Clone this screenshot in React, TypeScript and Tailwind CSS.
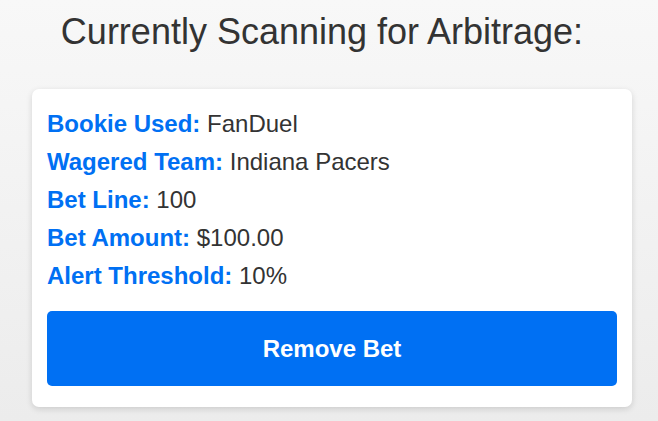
import { FC } from "react";

type BetRow = {
  label: string;
  value: string;
};

const rows: BetRow[] = [
  { label: "Bookie Used:", value: "FanDuel" },
  { label: "Wagered Team:", value: "Indiana Pacers" },
  { label: "Bet Line:", value: "100" },
  { label: "Bet Amount:", value: "$100.00" },
  { label: "Alert Threshold:", value: "10%" },
];

const BetCard: FC = () => {
  return (
    <div className="ml-[32px] w-[600px] rounded-[7px] bg-white px-[15px] pt-[21px] pb-[21px] shadow-[0_2px_6px_rgba(0,0,0,0.14)]">
      <div className="flex flex-col gap-[10px]">
        {rows.map((row) => (
          <p key={row.label} className="text-[24px] leading-[28px] text-[#333333]">
            <span className="font-bold text-[#0070f3]">{row.label}</span> {row.value}
          </p>
        ))}
      </div>
      <button className="mt-[21px] flex h-[75px] w-full items-center justify-center rounded-[5px] bg-[#0070f3] text-[24px] font-bold text-white">
        Remove Bet
      </button>
    </div>
  );
}

export default function App() {
  return (
    <div className="min-h-[421px] w-full bg-gradient-to-b from-[#f8f8f8] to-[#ececec] pt-[11px] font-['Liberation_Sans',Arial,sans-serif]">
      <h1 className="ml-[32px] w-[600px] pr-[20px] text-center text-[36px] leading-[41px] text-[#333333]">
        Currently Scanning for Arbitrage:
      </h1>
      <div className="mt-[37px]">
        <BetCard />
      </div>
    </div>
  );
}
